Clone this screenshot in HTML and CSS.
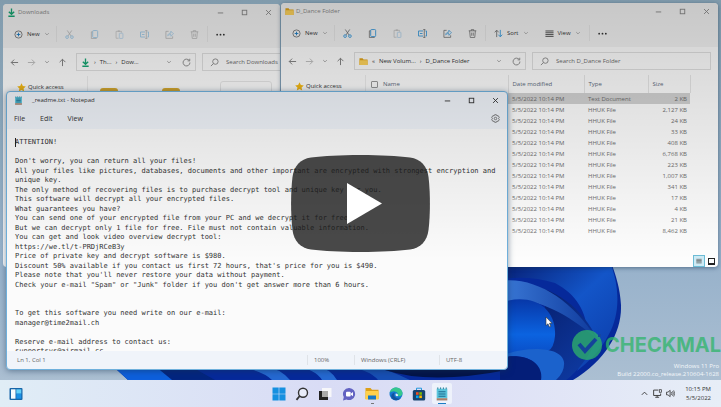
FILE: index.html
```html
<!DOCTYPE html>
<html lang="en">
<head>
    <meta charset="UTF-8">
    <title>Desktop video</title>
    <link rel="stylesheet" href="styles.css">
</head>
<body>
    <svg class="symbols" width="0" height="0">
        <symbol id="down" viewBox="0 0 10 10"><path d="M5 0.5V7M2 4.2L5 7L8 4.2M1.5 9.2H8.5" stroke="#17a673" stroke-width="1.5"/></symbol>
        <symbol id="folder" viewBox="0 0 10 10"><path d="M0.5 1.5H4L5 2.7H9.5V9H0.5Z" fill="#e0a318"/><path d="M0.5 3.7H9.5V9H0.5Z" fill="#ffd45c"/></symbol>
        <symbol id="plus" viewBox="0 0 10 10"><circle cx="5" cy="5" r="4" stroke="#777"/><path d="M5 3V7M3 5H7" stroke="#1a7cc4"/></symbol>
        <symbol id="chev" viewBox="0 0 10 10"><path d="M2 3.5L5 6.5L8 3.5" stroke="currentColor"/></symbol>
        <symbol id="cut" viewBox="0 0 10 10"><path d="M2.5 0.5L6.8 6.8M7.5 0.5L3.2 6.8" stroke="#666" stroke-width="0.8"/><circle cx="2.3" cy="7.9" r="1.5" stroke="#3a9bdc"/><circle cx="7.7" cy="7.9" r="1.5" stroke="#3a9bdc"/></symbol>
        <symbol id="copy" viewBox="0 0 10 10"><path d="M3 2H1.5V9.5H7V8.5" stroke="#666" stroke-width="0.8"/><rect x="3" y="0.6" width="5.5" height="7.8" rx="1" stroke="#3a9bdc"/></symbol>
        <symbol id="paste" viewBox="0 0 10 10"><path d="M4 9.2H1.2V1.5H7.2V3" stroke="#888" stroke-width="0.8"/><path d="M3 1.2H5.4" stroke="#888" stroke-width="1.4"/><rect x="4.8" y="3.6" width="4" height="5.8" rx="0.6" stroke="#5fa8e0" stroke-width="0.8"/></symbol>
        <symbol id="rename" viewBox="0 0 10 10"><path d="M5.6 2.2H0.6V7.8H5.6M8.2 2.2H9.5V7.8H8.2M2.2 5H5" stroke="#3a9bdc"/><path d="M7 0.7V9.3M5.8 0.6H8.2M5.8 9.4H8.2" stroke="#666" stroke-width="0.8"/></symbol>
        <symbol id="share" viewBox="0 0 10 10"><path d="M4 1.5H1V9.3H8.5V7" stroke="#666" stroke-width="0.8"/><path d="M3 6.5C3.3 4 5 3.5 6.5 3.5V1.3L9.4 4.2L6.5 7V5C5 5 4 5.4 3 6.5Z" stroke="#3a9bdc" stroke-width="0.8"/></symbol>
        <symbol id="trash" viewBox="0 0 10 10"><path d="M0.8 2H9.2M3.6 2V0.7H6.4V2M1.8 2L2.5 9.4H7.5L8.2 2M4.1 4V7.5M5.9 4V7.5" stroke="#666" stroke-width="0.8"/></symbol>
        <symbol id="dots" viewBox="0 0 10 10"><circle cx="1.3" cy="5.2" r="1" fill="#333"/><circle cx="5" cy="5.2" r="1" fill="#333"/><circle cx="8.7" cy="5.2" r="1" fill="#333"/></symbol>
        <symbol id="sort" viewBox="0 0 10 10"><path d="M3 9V1.5M0.8 3.7L3 1.3L5.2 3.7" stroke="#777"/><path d="M7 1V8.5M4.8 6.3L7 8.7L9.2 6.3" stroke="#3a9bdc"/></symbol>
        <symbol id="list" viewBox="0 0 10 10"><path d="M0.5 2.2H9.5M0.5 4.2H9.5M0.5 6.2H9.5M0.5 8.2H9.5" stroke="#555" stroke-width="1.1"/></symbol>
        <symbol id="back" viewBox="0 0 10 10"><path d="M9 5H1.5M4.6 1.8L1.4 5L4.6 8.2" stroke="currentColor"/></symbol>
        <symbol id="forward" viewBox="0 0 10 10"><path d="M1 5H8.5M5.4 1.8L8.6 5L5.4 8.2" stroke="currentColor"/></symbol>
        <symbol id="up" viewBox="0 0 10 10"><path d="M5 9V1.5M1.8 4.6L5 1.4L8.2 4.6" stroke="currentColor"/></symbol>
        <symbol id="refresh" viewBox="0 0 10 10"><path d="M8.2 3A3.8 3.8 0 1 0 8.8 5M8.6 0.8V3.2H6.2" stroke="#888"/></symbol>
        <symbol id="glass" viewBox="0 0 10 10"><circle cx="6" cy="4" r="3" stroke="currentColor"/><path d="M3.8 6.2L1 9" stroke="currentColor"/></symbol>
        <symbol id="star" viewBox="0 0 10 10"><path d="M5 0.3L6.5 3.4L9.8 3.8L7.3 6.1L8 9.5L5 7.8L2 9.5L2.7 6.1L0.2 3.8L3.5 3.4Z" fill="#f5b914"/></symbol>
        <symbol id="min" viewBox="0 0 10 10"><path d="M2 5.5H8" stroke="currentColor"/></symbol>
        <symbol id="max" viewBox="0 0 10 10"><rect x="2.5" y="2.5" width="5" height="5" stroke="currentColor"/></symbol>
        <symbol id="close" viewBox="0 0 10 10"><path d="M2.3 2.3L7.7 7.7M7.7 2.3L2.3 7.7" stroke="currentColor"/></symbol>
        <symbol id="gear" viewBox="0 0 10 10"><path d="M4 0.8H6L6.5 2L8 1.9L9.2 3.8L8.4 5L9.2 6.2L8 8.1L6.5 8L6 9.2H4L3.5 8L2 8.1L0.8 6.2L1.6 5L0.8 3.8L2 1.9L3.5 2Z" stroke="#666" stroke-width="0.9"/><circle cx="5" cy="5" r="1.4" stroke="#666" stroke-width="0.9"/></symbol>
        <symbol id="note" viewBox="0 0 10 10"><path d="M1.2 1.2H8.8V8H1.2Z" fill="#5cc5dc"/><path d="M1.2 8H8.8V9.6H1.2Z" fill="#a7806b"/><path d="M2.5 3.4H7.5M2.5 5H7.5M2.5 6.6H7.5" stroke="#1c6c90" stroke-width="0.8"/><path d="M2 0.3V1.6M4 0.3V1.6M6 0.3V1.6M8 0.3V1.6" stroke="#2b7f9c" stroke-width="0.7"/></symbol>
    </svg>

    <div class="desktop">
        <svg class="wallpaper" viewBox="0 0 721 380" preserveAspectRatio="none">
            <defs>
                <linearGradient id="sky" x1="0" y1="0" x2="0" y2="1"><stop offset="0" stop-color="#9dbdd2"/><stop offset="0.7" stop-color="#98b2cb"/><stop offset="1" stop-color="#abbfd2"/></linearGradient>
                <linearGradient id="petal" x1="0" y1="0" x2="1" y2="1"><stop offset="0" stop-color="#061c70"/><stop offset="0.5" stop-color="#1355c8"/><stop offset="1" stop-color="#0b3aa6"/></linearGradient>
                <linearGradient id="back-petal" x1="0" y1="0" x2="1" y2="1"><stop offset="0" stop-color="#04165c"/><stop offset="1" stop-color="#0f3da8"/></linearGradient>
                <linearGradient id="rim" x1="0" y1="0" x2="1" y2="0"><stop offset="0" stop-color="#3b7ad8"/><stop offset="1" stop-color="#0f3a9c"/></linearGradient>
                <linearGradient id="fold" x1="0" y1="0" x2="0" y2="1"><stop offset="0" stop-color="#0737a8"/><stop offset="0.6" stop-color="#0b63e0"/><stop offset="1" stop-color="#0a4ac2"/></linearGradient>
            </defs>
            <rect width="721" height="380" fill="url(#sky)"/>
            <path d="M116 369L128 380H573C606 360 622 332 621 305C620 288 616 276 611 262H500V369Z" fill="#06299a"/>
            <path d="M116 369L128 380H200L170 366Z" fill="#0d5fdc"/>
            <path d="M155 366L172 380H215L190 366Z" fill="#03257f"/>
            <path d="M235 366Q262 370 272 380H290Q280 368 262 366ZM296 366Q316 370 322 380H337Q330 368 314 366Z" fill="#2569d2"/>
            <path d="M345 366Q370 370 378 380H410Q390 370 370 366Z" fill="#174fb5"/>
            <path d="M385 370Q430 385 507 370L507 366H400Z" fill="#031348"/>
            <path d="M500 262H610C621 290 619 316 609 334C600 352 588 362 577 371C596 335 588 300 555 283Q530 275 500 279Z" fill="url(#petal)"/>
            <path d="M500 285C550 278 582 308 597 338C590 356 577 372 566 380H545V300H500Z" fill="url(#back-petal)"/>
            <path d="M500 281C535 276 572 300 596 338C570 316 532 292 500 303Z" fill="url(#rim)"/>
            <path d="M500 303C530 292 557 306 555 336Q554 348 548 351Q520 351 500 358Z" fill="url(#fold)"/>
            <path d="M500 357C520 346 562 345 564 362Q565 372 556 380H540C544 362 525 352 500 358Z" fill="#1b62cc"/>
            <path d="M500 358C525 352 544 363 541 380H500Z" fill="#041e78"/>
        </svg>

        <div class="brand">
            <svg class="brand-logo" viewBox="0 0 30 30"><circle cx="15" cy="15" r="15" fill="#2fb56a"/><path d="M7 14L13 21L24 9" fill="none" stroke="#17489b" stroke-width="4"/><path d="M26 4h3v3h-3z" fill="#17489b"/></svg>
            <span>CHECKMAL</span>
        </div>
        <p class="build">Windows 11 Pro<br>Build 22000.co_release.210604-1628</p>

        <section class="window explorer downloads">
            <header class="titlebar">
                <svg class="icon"><use href="#down"/></svg>
                <h2>Downloads</h2>
                <button aria-label="Minimize"><svg class="icon"><use href="#min"/></svg></button>
                <button aria-label="Maximize"><svg class="icon"><use href="#max"/></svg></button>
                <button aria-label="Close"><svg class="icon"><use href="#close"/></svg></button>
            </header>
            <div class="commands">
                <button class="menu-button new"><svg class="icon"><use href="#plus"/></svg>New<svg class="icon small"><use href="#chev"/></svg></button>
                <div class="tools faded">
                    <button aria-label="Cut"><svg class="icon"><use href="#cut"/></svg></button>
                    <button aria-label="Copy"><svg class="icon"><use href="#copy"/></svg></button>
                    <button aria-label="Paste"><svg class="icon"><use href="#paste"/></svg></button>
                    <button aria-label="Rename"><svg class="icon"><use href="#rename"/></svg></button>
                    <button aria-label="Share"><svg class="icon"><use href="#share"/></svg></button>
                    <button aria-label="Delete"><svg class="icon"><use href="#trash"/></svg></button>
                </div>
                <button class="more" aria-label="More"><svg class="icon"><use href="#dots"/></svg></button>
            </div>
            <div class="navigation">
                <div class="arrows">
                    <button aria-label="Back"><svg class="icon"><use href="#back"/></svg></button>
                    <button class="off" aria-label="Forward"><svg class="icon"><use href="#forward"/></svg></button>
                    <button class="recent" aria-label="Recent"><svg class="icon small"><use href="#chev"/></svg></button>
                    <button aria-label="Up"><svg class="icon"><use href="#up"/></svg></button>
                </div>
                <div class="address">
                    <svg class="icon"><use href="#down"/></svg>
                    <span>›</span><a href="#">Th...</a><span>›</span><a href="#">Dow...</a>
                    <button class="history" aria-label="History"><svg class="icon small"><use href="#chev"/></svg></button>
                    <button aria-label="Refresh"><svg class="icon"><use href="#refresh"/></svg></button>
                </div>
                <label class="search"><svg class="icon"><use href="#glass"/></svg><input type="text" placeholder="Search Downloads" aria-label="Search Downloads"></label>
            </div>
            <div class="content">
                <aside><a href="#"><svg class="icon"><use href="#star"/></svg>Quick access</a></aside>
                <div class="tiles">
                    <div class="tile"></div>
                    <div class="tile"></div>
                    <div class="tile file"></div>
                </div>
            </div>
        </section>

        <section class="window explorer dance">
            <header class="titlebar">
                <svg class="icon"><use href="#folder"/></svg>
                <h2>D_Dance Folder</h2>
                <button aria-label="Minimize"><svg class="icon"><use href="#min"/></svg></button>
                <button aria-label="Maximize"><svg class="icon"><use href="#max"/></svg></button>
                <button aria-label="Close"><svg class="icon"><use href="#close"/></svg></button>
            </header>
            <div class="commands">
                <button class="menu-button new"><svg class="icon"><use href="#plus"/></svg>New<svg class="icon small"><use href="#chev"/></svg></button>
                <div class="tools">
                    <button aria-label="Cut"><svg class="icon"><use href="#cut"/></svg></button>
                    <button aria-label="Copy"><svg class="icon"><use href="#copy"/></svg></button>
                    <button class="off" aria-label="Paste"><svg class="icon"><use href="#paste"/></svg></button>
                    <button aria-label="Rename"><svg class="icon"><use href="#rename"/></svg></button>
                    <button aria-label="Share"><svg class="icon"><use href="#share"/></svg></button>
                    <button aria-label="Delete"><svg class="icon"><use href="#trash"/></svg></button>
                </div>
                <div class="arrange">
                    <button class="menu-button"><svg class="icon"><use href="#sort"/></svg>Sort<svg class="icon small"><use href="#chev"/></svg></button>
                    <button class="menu-button"><svg class="icon"><use href="#list"/></svg>View<svg class="icon small"><use href="#chev"/></svg></button>
                </div>
                <button class="more" aria-label="More"><svg class="icon"><use href="#dots"/></svg></button>
            </div>
            <div class="navigation">
                <div class="arrows">
                    <button aria-label="Back"><svg class="icon"><use href="#back"/></svg></button>
                    <button class="off" aria-label="Forward"><svg class="icon"><use href="#forward"/></svg></button>
                    <button class="recent" aria-label="Recent"><svg class="icon small"><use href="#chev"/></svg></button>
                    <button aria-label="Up"><svg class="icon"><use href="#up"/></svg></button>
                </div>
                <div class="address">
                    <svg class="icon"><use href="#folder"/></svg>
                    <span>«</span><a href="#">New Volum...</a><span>›</span><a href="#">D_Dance Folder</a>
                    <button class="history" aria-label="History"><svg class="icon small"><use href="#chev"/></svg></button>
                    <button aria-label="Refresh"><svg class="icon"><use href="#refresh"/></svg></button>
                </div>
                <label class="search"><svg class="icon"><use href="#glass"/></svg><input type="text" placeholder="Search D_Dance Folder" aria-label="Search D_Dance Folder"></label>
            </div>
            <div class="content">
                <aside><a href="#"><svg class="icon"><use href="#star"/></svg>Quick access</a></aside>
                <table class="files">
                    <thead>
                        <tr><th class="name"><label><input type="checkbox">Name</label></th><th class="date">Date modified</th><th class="type">Type</th><th class="size">Size</th></tr>
                    </thead>
                    <tbody>
                        <tr class="selected"><td></td><td>5/5/2022 10:14 PM</td><td>Text Document</td><td>2 KB</td></tr>
                        <tr><td></td><td>5/5/2022 10:14 PM</td><td>HHUK File</td><td>2,127 KB</td></tr>
                        <tr><td></td><td>5/5/2022 10:14 PM</td><td>HHUK File</td><td>24 KB</td></tr>
                        <tr><td></td><td>5/5/2022 10:14 PM</td><td>HHUK File</td><td>33 KB</td></tr>
                        <tr><td></td><td>5/5/2022 10:14 PM</td><td>HHUK File</td><td>408 KB</td></tr>
                        <tr><td></td><td>5/5/2022 10:14 PM</td><td>HHUK File</td><td>6,768 KB</td></tr>
                        <tr><td></td><td>5/5/2022 10:14 PM</td><td>HHUK File</td><td>223 KB</td></tr>
                        <tr><td></td><td>5/5/2022 10:14 PM</td><td>HHUK File</td><td>1,007 KB</td></tr>
                        <tr><td></td><td>5/5/2022 10:14 PM</td><td>HHUK File</td><td>341 KB</td></tr>
                        <tr><td></td><td>5/5/2022 10:14 PM</td><td>HHUK File</td><td>17 KB</td></tr>
                        <tr><td></td><td>5/5/2022 10:14 PM</td><td>HHUK File</td><td>4 KB</td></tr>
                        <tr><td></td><td>5/5/2022 10:14 PM</td><td>HHUK File</td><td>21 KB</td></tr>
                        <tr><td></td><td>5/5/2022 10:14 PM</td><td>HHUK File</td><td>8,462 KB</td></tr>
                    </tbody>
                </table>
            </div>
            <footer class="views">
                <button class="active" aria-label="Details"><svg class="icon small"><use href="#list"/></svg></button>
                <button aria-label="Large icons"><span class="thumb"></span></button>
            </footer>
        </section>

        <section class="window notepad">
            <header class="titlebar">
                <svg class="icon"><use href="#note"/></svg>
                <h2>_readme.txt - Notepad</h2>
                <button aria-label="Minimize"><svg class="icon"><use href="#min"/></svg></button>
                <button aria-label="Maximize"><svg class="icon"><use href="#max"/></svg></button>
                <button aria-label="Close"><svg class="icon"><use href="#close"/></svg></button>
            </header>
            <div class="menubar">
                <button>File</button>
                <button>Edit</button>
                <button>View</button>
                <button class="settings" aria-label="Settings"><svg class="icon"><use href="#gear"/></svg></button>
            </div>
            <textarea class="editor" aria-label="Text" spellcheck="false">ATTENTION!

Don't worry, you can return all your files!
All your files like pictures, databases, documents and other important are encrypted with strongest encryption and unique key.
The only method of recovering files is to purchase decrypt tool and unique key for you.
This software will decrypt all your encrypted files.
What guarantees you have?
You can send one of your encrypted file from your PC and we decrypt it for free.
But we can decrypt only 1 file for free. File must not contain valuable information.
You can get and look video overview decrypt tool:
https://we.tl/t-PRDjRCeB3y
Price of private key and decrypt software is $980.
Discount 50% available if you contact us first 72 hours, that's price for you is $490.
Please note that you'll never restore your data without payment.
Check your e-mail "Spam" or "Junk" folder if you don't get answer more than 6 hours.


To get this software you need write on our e-mail:
manager@time2mail.ch

Reserve e-mail address to contact us:
supportsys@airmail.cc</textarea>
            <footer class="status">
                <span>Ln 1, Col 1</span>
                <span class="zoom">100%</span>
                <span class="eol">Windows (CRLF)</span>
                <span class="encoding">UTF-8</span>
            </footer>
            <span class="caret"></span>
        </section>

        <svg class="pointer" viewBox="0 0 8 12"><path d="M1 1V9.5L3 7.8L4.4 11L5.8 10.3L4.5 7.3H7Z" fill="#fff" stroke="#333" stroke-width="0.6"/></svg>
    </div>

    <nav class="taskbar">
        <button class="app widgets" aria-label="Widgets"><svg viewBox="0 0 14 14"><rect x="0.5" y="1" width="13" height="12" rx="1" fill="#1665a8"/><rect x="2" y="2.3" width="4.5" height="9.4" fill="#f5fbff"/><rect x="7.3" y="2.3" width="5" height="4.4" fill="#62d0fa"/><rect x="7.3" y="6.7" width="5" height="5" fill="#1b91e6"/></svg></button>
        <div class="apps">
            <button class="app" aria-label="Start"><svg viewBox="0 0 14 14"><path d="M0.5 0.5H6.7V6.7H0.5ZM7.3 0.5H13.5V6.7H7.3ZM0.5 7.3H6.7V13.5H0.5ZM7.3 7.3H13.5V13.5H7.3Z" fill="#1690e0"/></svg></button>
            <button class="app" aria-label="Search"><svg viewBox="0 0 14 14"><circle cx="8" cy="5.8" r="4.5" fill="#e9edfa" stroke="#333" stroke-width="1.4"/><path d="M4.7 9L1.5 12.8" stroke="#333" stroke-width="1.8"/></svg></button>
            <button class="app" aria-label="Task view"><svg viewBox="0 0 14 14"><rect x="4" y="1" width="9.5" height="9" fill="#f7f7fa"/><rect x="1" y="4" width="9" height="9" fill="#222"/><rect x="4" y="4" width="6" height="6" fill="#aaa"/></svg></button>
            <button class="app" aria-label="Chat"><svg viewBox="0 0 14 14"><path d="M7.3 1A6 6 0 1 1 4.5 12.4L1 13.4L1.8 10A6 6 0 0 1 7.3 1Z" fill="#6262c2"/><rect x="4" y="4.8" width="4.7" height="4.6" rx="1" fill="#fff"/><path d="M9 6.5L11 5V9.2L9 7.8Z" fill="#fff"/></svg></button>
            <button class="app open" aria-label="File Explorer"><svg viewBox="0 0 14 14"><path d="M0.5 1H5.5L7 2.8H13.5V12H0.5Z" fill="#dda018"/><path d="M0.5 4H13.5V12.5H0.5Z" fill="#ffd04b"/><path d="M3 8.5H11V12.5H3Z" fill="#1677c7"/></svg></button>
            <button class="app" aria-label="Edge"><svg viewBox="0 0 14 14"><circle cx="7" cy="7" r="6.5" fill="#1377cf"/><path d="M0.7 6C1.5 2 4.5 0.5 7 0.5C11 0.5 13.5 3.5 13.5 6.2C13.5 9 10.5 10 8.5 8.8C9.5 6.5 8 4.6 5.6 4.4C3.4 4.2 1.5 5 0.7 6Z" fill="#35c78e"/><path d="M5.8 5.5C4 8 5.5 12 11.5 11.6C9 14 2.8 13.8 2.3 9.5C2.3 7 4 5.8 5.8 5.5Z" fill="#12539e"/><path d="M6.8 6.5A2 2 0 0 1 9 8.8C7 10.5 6 8 6.8 6.5Z" fill="#e6eefa"/></svg></button>
            <button class="app" aria-label="Store"><svg viewBox="0 0 14 14"><path d="M4.5 3.5V1.2H9.5V3.5" fill="none" stroke="#2496da"/><rect x="0.8" y="3" width="12.4" height="10.5" rx="1.5" fill="#17446f"/><path d="M4 5.2H6.6V7.8H4Z" fill="#f25022"/><path d="M7.3 5.2H9.9V7.8H7.3Z" fill="#7fba00"/><path d="M4 8.5H6.6V11.1H4Z" fill="#00a4ef"/><path d="M7.3 8.5H9.9V11.1H7.3Z" fill="#ffb900"/></svg></button>
            <button class="app open current" aria-label="Notepad"><svg><use href="#note"/></svg></button>
        </div>
        <div class="tray">
            <svg class="icon" viewBox="0 0 10 10"><path d="M2 6.5L5 3.5L8 6.5" stroke="#333"/></svg>
            <svg class="icon" viewBox="0 0 10 10"><path d="M6 1.2H0.7V7.2H8.5V5M4.6 7.2V9M2.5 9.2H6.8" stroke="#333"/><rect x="7" y="0.8" width="2.5" height="2.8" stroke="#333" stroke-width="0.8"/></svg>
            <svg class="icon" viewBox="0 0 10 10"><path d="M0.6 3.5H2.2L4.6 1.5V8.5L2.2 6.5H0.6Z" stroke="#333" stroke-width="0.9"/><path d="M6 3.5Q7 5 6 6.5M7.2 2.5Q9 5 7.2 7.5M8.5 1.5Q10.8 5 8.5 8.5" stroke="#333" stroke-width="0.8"/></svg>
            <time>10:15 PM<br>5/5/2022</time>
        </div>
    </nav>

    <div class="shade"></div>
    <button class="play" aria-label="Play">
        <svg viewBox="0 0 139 97"><path d="M69.5 0C90 0 106 1 119 2.500C130 4 136 11 137.500 22C139.400 37 139.400 60 137.500 75C136 86 130 93 119 94.500C106 96 90 97 69.500 97C49 97 33 96 20 94.500C9 93 3 86 1.500 75C-0.400 60 -0.400 37 1.500 22C3 11 9 4 20 2.500C33 1 49 0 69.500 0Z" fill="#1b1b1b" fill-opacity="0.8"/><path d="M56 28V69L91 48.500Z" fill="#fff"/></svg>
    </button>
</body>
</html>
```

FILE: styles.css
```css
* {
    box-sizing: border-box;
}
body {
    margin: 0;
    height: 100vh;
    display: flex;
    flex-direction: column;
    position: relative;
    overflow: hidden;
    font-family: "Open Sans", "Noto Sans", sans-serif;
    font-size: 6px;
    line-height: 8px;
    color: #333;
}
button, input {
    font: inherit;
    color: inherit;
    border: 0;
    padding: 0;
    margin: 0;
    background: none;
}
button {
    display: flex;
    align-items: center;
    justify-content: center;
}
a {
    color: inherit;
    text-decoration: none;
}
h2 {
    margin: 0;
    font-size: 6px;
    font-weight: normal;
}
.symbols {
    position: absolute;
}
.icon {
    width: 9px;
    height: 9px;
    flex: none;
    fill: none;
}
.icon.small {
    width: 6px;
    height: 6px;
}
.desktop {
    flex: 1;
    position: relative;
    overflow: hidden;
}
.wallpaper {
    position: absolute;
    width: 100%;
    height: 100%;
}

/* windows */
.window {
    position: absolute;
    display: flex;
    flex-direction: column;
    overflow: hidden;
    border-radius: 4px;
}
.explorer {
    background: #fdfdfd;
}
.downloads {
    left: 3px;
    top: 4px;
    width: 277px;
    height: 263px;
}
.dance {
    left: 281px;
    top: 3px;
    right: 3px;
    height: 264px;
    box-shadow: 0 1px 4px rgba(20, 50, 80, 0.5);
}
.titlebar {
    display: flex;
    align-items: center;
    height: 16px;
    padding: 0 1px 0 4px;
    gap: 2px;
}
.explorer .titlebar {
    background: #f3f3f3;
    color: #888;
}
.titlebar h2 {
    flex: 1;
}
.titlebar button {
    width: 22px;
    height: 16px;
}
.commands {
    display: flex;
    align-items: center;
    height: 28px;
    padding-left: 11px;
    background: #f3f3f3;
}
.menu-button {
    gap: 4px;
}
.menu-button .small {
    color: #888;
}
.new {
    width: 42px;
    justify-content: flex-start;
}
.tools {
    display: flex;
    border-left: 1px solid #e6e6e6;
    border-right: 1px solid #e6e6e6;
}
.tools button, .more {
    width: 25px;
    height: 16px;
}
.faded .icon {
    opacity: 0.45;
}
.off {
    opacity: 0.5;
}
.arrange {
    display: flex;
    align-items: center;
    gap: 16px;
    height: 16px;
    padding: 0 8px;
    border-right: 1px solid #e6e6e6;
}
.navigation {
    display: flex;
    align-items: center;
    height: 28px;
    padding-left: 7px;
}
.arrows {
    display: flex;
    flex: none;
    align-items: center;
    width: 66px;
    gap: 8px;
    color: #777;
}
.recent {
    width: 6px;
}
.address, .search {
    display: flex;
    align-items: center;
    height: 18px;
    border: 1px solid #e0e0e0;
}
.address {
    flex: none;
    width: 120px;
    padding: 0 4px;
    gap: 4px;
}
.dance .address {
    width: 172px;
}
.history {
    margin-left: auto;
    margin-right: 6px;
    color: #777;
}
.search {
    flex: 1;
    min-width: 0;
    margin-left: 6px;
    padding-left: 7px;
    gap: 7px;
    color: #888;
}
.downloads .search {
    border-right: 0;
}
.dance .search {
    margin-right: 7px;
}
.search input {
    flex: 1;
    min-width: 0;
    outline: 0;
}
.search input::placeholder {
    color: #6b6b6b;
    opacity: 1;
}
.content {
    display: flex;
    flex: 1;
}
aside {
    width: 85px;
    padding-left: 14px;
    border-right: 1px solid #ececec;
}
aside a {
    display: flex;
    align-items: center;
    gap: 2px;
    height: 22px;
}
.tiles {
    display: flex;
    flex: 1;
    padding: 12px 0 0 12px;
    gap: 44px;
}
.tile {
    width: 18px;
    height: 14px;
    border-radius: 3px;
    background: #dfae2c;
}
.tile.file {
    width: 52px;
    height: 40px;
    margin-top: -7px;
    margin-left: -4px;
    background: none;
    border: 1px solid #e6e6e6;
}
.files {
    width: 324px;
    align-self: flex-start;
    border-collapse: collapse;
    table-layout: fixed;
    color: #6d6d6d;
}
.files th {
    height: 18px;
    padding: 0 0 0 4px;
    text-align: left;
    font-weight: normal;
    color: #5c6a7c;
    border-right: 1px solid #e6e6e6;
}
.files .name {
    width: 142px;
    padding-left: 5px;
}
.files .date {
    width: 76px;
}
.files .type {
    width: 64px;
}
.files .size {
    width: 42px;
}
.files td {
    height: 11px;
    padding: 0 0 0 4px;
    white-space: nowrap;
}
.files td:nth-child(4) {
    text-align: right;
    padding: 0 3px 0 0;
}
.selected {
    background: #d2d2d2;
}
.name label {
    display: flex;
    align-items: center;
    gap: 5px;
}
.name input {
    appearance: none;
    width: 7px;
    height: 7px;
    border: 1px solid #999;
    border-radius: 1px;
}
.views {
    display: flex;
    justify-content: flex-end;
    padding-right: 1px;
}
.views button {
    width: 12px;
    height: 12px;
}
.views .active {
    border: 1px solid #6cbcd6;
    background: #cdeaf4;
}
.thumb {
    width: 7px;
    height: 7px;
    border: 1px solid #222;
    border-bottom-width: 2px;
}

/* notepad */
.notepad {
    left: 6px;
    top: 91px;
    width: 502px;
    height: 279px;
    border: 1px solid #6fb0dc;
    background: #f0f4fa;
    box-shadow: 0 1px 6px rgba(20, 50, 80, 0.5);
}
.notepad .titlebar {
    padding: 0 1px 0 7px;
    color: #333;
}
.notepad .titlebar h2 {
    padding-left: 7px;
}
.menubar {
    display: flex;
    align-items: center;
    height: 21px;
    padding: 0 7px;
    gap: 15px;
    font-size: 7px;
}
.settings {
    margin-left: auto;
}
.editor {
    flex: 1;
    min-height: 0;
    margin: 0;
    padding: 9px 8px 0;
    border: 0;
    outline: 0;
    resize: none;
    overflow: hidden;
    background: #fbfbfb;
    color: #333;
    font-family: "DejaVu Sans Mono", monospace;
    font-size: 7px;
    line-height: 1.36;
}
.caret {
    position: absolute;
    left: 8px;
    top: 46px;
    width: 1px;
    height: 9px;
    background: #222;
}
.status {
    display: flex;
    align-items: center;
    height: 18px;
    padding-left: 10px;
    color: #666;
}
.status span {
    height: 10px;
    line-height: 10px;
}
.status .zoom {
    width: 47px;
    margin-left: auto;
}
.status .eol {
    width: 85px;
}
.status .encoding {
    width: 68px;
}
.zoom, .eol, .encoding {
    padding-left: 6px;
    border-left: 1px solid #dfe3e8;
}
.pointer {
    position: absolute;
    left: 545px;
    top: 316px;
    width: 8px;
    height: 12px;
}

/* marks on the wallpaper */
.brand {
    position: absolute;
    right: 0;
    top: 330px;
    display: flex;
    align-items: center;
    gap: 3px;
    font: bold 20px/30px Inter, sans-serif;
    color: #2fb56a;
    opacity: 0.75;
}
.brand-logo {
    width: 30px;
    height: 30px;
}
.build {
    position: absolute;
    right: 2px;
    bottom: 2px;
    margin: 0;
    text-align: right;
    color: #f3f7fa;
}

/* taskbar */
.taskbar {
    position: relative;
    display: flex;
    align-items: center;
    justify-content: center;
    height: 27px;
    background: linear-gradient(to right, #e0edf6, #d9dcf5 45%, #dfe2f6 70%, #e7eef7);
}
.apps {
    display: flex;
    justify-content: space-between;
    width: 184px;
}
.app {
    position: relative;
    width: 20px;
    height: 21px;
    border-radius: 2px;
}
.app svg {
    width: 14px;
    height: 14px;
}
.widgets {
    position: absolute;
    left: 6px;
}
.current {
    background: #eef2fb;
}
.open::after {
    content: "";
    position: absolute;
    bottom: 0;
    width: 3px;
    height: 1px;
    background: #777;
}
.current::after {
    width: 8px;
    background: #1a7cc4;
}
.tray {
    position: absolute;
    right: 10px;
    display: flex;
    align-items: center;
    gap: 4px;
}
.tray time {
    width: 32px;
    text-align: right;
    line-height: 9px;
}

/* player overlay */
.shade {
    position: absolute;
    top: 0;
    width: 100%;
    height: 260px;
    pointer-events: none;
    background: linear-gradient(rgba(0, 0, 0, 0.18), rgba(0, 0, 0, 0));
}
.play {
    position: absolute;
    inset: 0;
    margin: auto;
    width: 139px;
    height: 97px;
}
.play svg {
    width: 100%;
    height: 100%;
}
```
